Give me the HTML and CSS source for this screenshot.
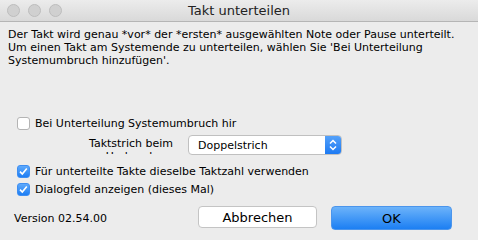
FILE: index.html
```html
<!DOCTYPE html>
<html>
<head>
<meta charset="utf-8">
<link rel="stylesheet" href="styles.css">
</head>
<body>
<div class="window">
  <div class="titlebar">
    <div class="lights"><span class="light"></span><span class="light"></span><span class="light"></span></div>
    <div class="title">Takt unterteilen</div>
    <div></div>
  </div>
  <div class="content">
    <p class="intro">Der Takt wird genau *vor* der *ersten* ausgewählten Note oder Pause unterteilt.<br>Um einen Takt am Systemende zu unterteilen, wählen Sie 'Bei Unterteilung<br>Systemumbruch hinzufügen'.</p>
    <div class="options">
      <label class="check"><span class="box"></span><span class="check-text">Bei Unterteilung Systemumbruch hir</span></label>
      <div class="popup-row">
        <span class="popup-label">Taktstrich beim<br>Umbruch</span>
        <div class="popup">
          <span class="popup-value">Doppelstrich</span>
          <span class="popup-arrows">
            <svg width="16" height="20" viewBox="0 0 16 20"><path d="M5 8.5 L8 5.5 L11 8.5 M5 11.5 L8 14.5 L11 11.5" fill="none" stroke="#fff" stroke-width="1.5"/></svg>
          </span>
        </div>
      </div>
      <label class="check checked"><span class="box"><svg width="13" height="13" viewBox="0 0 13 13"><path d="M3 6.6 L5.3 9.1 L9.8 3.4" fill="none" stroke="#fff" stroke-width="1.6"/></svg></span><span class="check-text">Für unterteilte Takte dieselbe Taktzahl verwenden</span></label>
      <label class="check checked"><span class="box"><svg width="13" height="13" viewBox="0 0 13 13"><path d="M3 6.6 L5.3 9.1 L9.8 3.4" fill="none" stroke="#fff" stroke-width="1.6"/></svg></span><span class="check-text">Dialogfeld anzeigen (dieses Mal)</span></label>
    </div>
    <div class="footer">
      <span class="version">Version 02.54.00</span>
      <div class="buttons">
        <button class="btn">Abbrechen</button>
        <button class="btn default">OK</button>
      </div>
    </div>
  </div>
</div>
</body>
</html>
```
FILE: styles.css
```css
html, body {
  margin: 0;
  padding: 0;
}
body {
  width: 478px;
  height: 240px;
  overflow: hidden;
  background: #ececec;
  font-family: "DejaVu Sans", "Liberation Sans", sans-serif;
  font-size: 11px;
  color: #000;
}
.window {
  display: flex;
  flex-direction: column;
  height: 240px;
}
.titlebar {
  height: 21px;
  border-bottom: 1px solid #b5b5b5;
  background: linear-gradient(#ececec, #d9d9d9);
  display: grid;
  grid-template-columns: 1fr auto 1fr;
  align-items: center;
}
.lights {
  display: flex;
  gap: 8px;
  padding-left: 7px;
}
.light {
  width: 11px;
  height: 11px;
  border-radius: 50%;
  background: #d0d0d0;
  border: 0.5px solid #bdbdbd;
}
.title {
  font-size: 13px;
  color: #222;
}
.content {
  padding: 6px 8px 0 8px;
  display: flex;
  flex-direction: column;
}
.intro {
  margin: 0;
  line-height: 13px;
}
.options {
  margin-top: 47px;
  padding-left: 9px;
  display: flex;
  flex-direction: column;
}
.check {
  display: flex;
  align-items: center;
  gap: 5px;
  height: 18px;
}
.box {
  border: 1px solid #b4b4b4;
  border-radius: 3px;
  background: #fff;
  display: flex;
  align-items: center;
  justify-content: center;
  box-sizing: border-box;
  width: 13px;
  height: 13px;
}
.box svg { display: block; flex: none; }
.checked .box {
  background: linear-gradient(#5ea9fb, #1d7ef4);
  border-color: #3d8ef2;
}
.popup-row {
  display: flex;
  align-items: flex-start;
  height: 20px;
  margin: 3px 0 7px 0;
}
.popup-label {
  width: 100px;
  margin-left: 64px;
  text-align: center;
  line-height: 13px;
  height: 19px;
  padding-top: 2px;
  box-sizing: border-box;
  overflow: hidden;
}
.popup {
  margin-left: 7px;
  width: 154px;
  height: 20px;
  box-sizing: border-box;
  border: 1px solid #c0c0c0;
  border-radius: 4px;
  background: #fff;
  display: flex;
  align-items: center;
  overflow: hidden;
}
.popup-value {
  flex: 1;
  padding-left: 9px;
}
.popup-arrows {
  width: 16px;
  height: 20px;
  background: linear-gradient(#57a3fa, #1a78f2);
  display: flex;
  align-items: center;
  justify-content: center;
}
.footer {
  margin-top: 8px;
  display: flex;
  align-items: center;
  justify-content: space-between;
  padding-left: 6px;
  padding-right: 18px;
}
.buttons {
  display: flex;
  gap: 14px;
}
.btn {
  font-family: "DejaVu Sans", "Liberation Sans", sans-serif;
  font-size: 13px;
  width: 119px;
  height: 22px;
  border: 1px solid #c4c4c4;
  border-radius: 4px;
  background: #fff;
  padding: 0;
  color: #000;
}
.btn.default {
  width: 121px;
  height: 24px;
  border-color: #4b95ec;
  background: linear-gradient(#6cb3fa, #1c7ff3);
}
```
